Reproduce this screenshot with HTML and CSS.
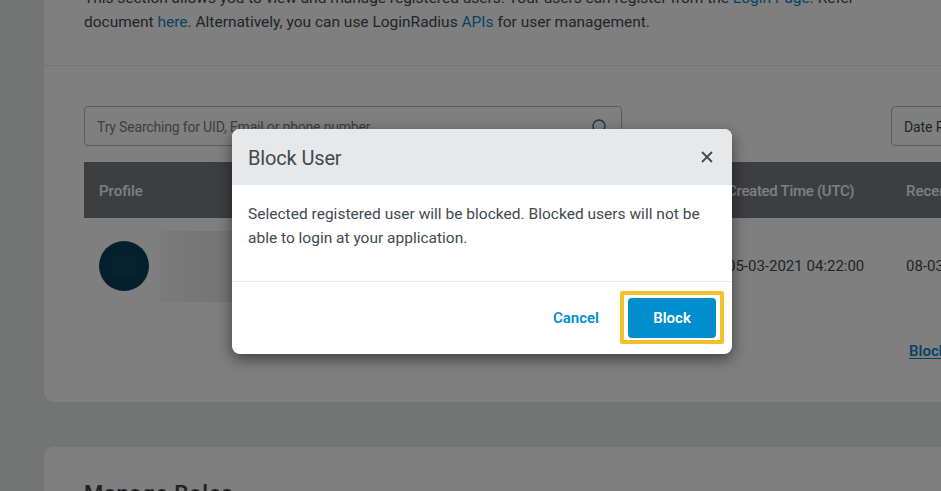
FILE: index.html
```html
<!DOCTYPE html>
<html lang="en">
<head>
<meta charset="utf-8">
<title>Manage Users</title>
<link rel="stylesheet" href="styles.css">
</head>
<body>
<main class="page">
  <section class="card users">
    <p class="intro"><span class="line l1">This section allows you to view and manage registered users. Your users can register from the <a>Login Page</a>. Refer</span><span class="line l2">document <a>here</a>. Alternatively, you can use LoginRadius <a>APIs</a> for user management.</span></p>
    <div class="content">
      <div class="filters">
        <div class="field search"><span class="placeholder">Try Searching for UID, Email or phone number</span>
          <svg width="18" height="18" viewBox="0 0 18 18" fill="none" stroke="#0d76b0" stroke-width="1.4"><circle cx="8" cy="8" r="6"/><path d="M12.2 12.2 16 16"/></svg>
        </div>
        <div class="field date">Date Range</div>
      </div>
      <div class="row head"><span class="profile">Profile</span><span class="created-head">Created Time (UTC)</span><span>Recent Login</span></div>
      <div class="row user">
        <div class="identity"><i class="avatar"><i class="initial"></i></i><i class="redacted"></i></div>
        <span class="created">05-03-2021 04:22:00</span><span class="recent">08-03-2021</span>
      </div>
      <div class="actions"><a>Block</a></div>
    </div>
  </section>
  <section class="card roles"><h2>Manage Roles</h2></section>
</main>
<div class="overlay">
  <div class="modal" role="dialog">
    <header><h3>Block User</h3>
      <svg width="12" height="12" viewBox="0 0 12 12" fill="none" stroke="#42494f" stroke-width="1.8"><path d="M1 1 11 11M11 1 1 11"/></svg>
    </header>
    <div class="message"><span class="line m1">Selected registered user will be blocked. Blocked users will not be</span><span class="line m2">able to login at your application.</span></div>
    <footer><button class="cancel">Cancel</button><div class="highlight"><button class="block">Block</button></div></footer>
  </div>
</div>
</body>
</html>
```
FILE: styles.css
```css
* { box-sizing: border-box; }
body { margin: 0; height: 491px; overflow: hidden; background: #e7ebe9; font-family: Roboto, "Liberation Sans", sans-serif; font-size: 15px; color: #42494f; }
a { color: #0a88c6; }
.line { display: block; white-space: nowrap; }
.page { height: 491px; padding-left: 44px; overflow: hidden; }
.card { width: 1100px; background: #fff; }
.users { height: 402px; border-radius: 0 0 10px 10px; }
.intro { display: flow-root; margin: 0; height: 66px; padding-left: 40px; border-bottom: 1px solid #e7e8ea; font-size: 15.5px; line-height: 24px; }
.l1 { margin-top: -14px; letter-spacing: -.015px; }
.l2 { letter-spacing: -.005px; }
.content { padding: 40px 0 0 40px; }
.filters { display: flex; justify-content: space-between; width: 957px; }
.field { height: 40px; border: 1px solid #b4b6b9; border-radius: 4px; display: flex; align-items: center; font-size: 14px; white-space: nowrap; padding: 2px 12px 0; }
.search { width: 538px; justify-content: space-between; }
.placeholder { color: #7a7f84; letter-spacing: -.18px; }
.date { width: 150px; letter-spacing: -.1px; }
.row { display: grid; grid-template-columns: 628px 179px 1fr; align-items: center; padding-left: 15px; white-space: nowrap; }
.head { height: 56px; margin-top: 16px; padding-top: 2px; background: #7a7c80; color: #fff; font-weight: 500; }
.created-head { letter-spacing: -.29px; }
.user { height: 96px; }
.identity { display: flex; align-items: center; gap: 11px; }
.avatar { display: flex; align-items: center; justify-content: center; width: 50px; height: 50px; border-radius: 50%; background: #08405e; }
.initial { width: 24px; height: 23px; background: #0e4664; }
.redacted { width: 100px; height: 71px; background: linear-gradient(90deg, #f6f6f6, #e9ebea 50%, #eee); }
.actions { padding: 28px 0 0 825px; font-weight: 600; }
.actions a { text-decoration: underline; text-underline-offset: 2px; }
.roles { height: 200px; margin-top: 45px; border-radius: 10px; padding: 33px 40px; }
h2 { margin: 0; font-size: 22px; line-height: 28px; font-weight: 600; letter-spacing: .75px; }
.overlay { position: absolute; inset: 0; background: rgba(0,0,0,.5); padding: 129px 0 0 232px; }
.modal { width: 500px; height: 225px; border-radius: 8px; background: #fff; box-shadow: 0 5px 15px rgba(0,0,0,.5); overflow: hidden; }
header { height: 56px; padding: 0 19px 0 16px; background: #e7e8ea; display: flex; align-items: center; justify-content: space-between; }
h3 { margin: 2px 0 0; font-size: 20px; font-weight: 400; letter-spacing: -.15px; }
.message { height: 97px; padding: 17px 16px; border-bottom: 1px solid #e7e8ea; font-size: 15.5px; line-height: 24px; }
.m1 { letter-spacing: .015px; }
footer { display: flex; justify-content: flex-end; align-items: center; height: 72px; padding: 0 8px 2px 0; gap: 21px; }
button { border: 0; padding: 0; background: none; font: 600 15px Roboto, sans-serif; color: #008ecf; }
.cancel { padding-top: 2px; }
.highlight { width: 104px; height: 53px; padding: 3px 4px; border: 4px solid #f2c12e; border-radius: 2px; }
.block { width: 88px; height: 40px; border-radius: 4px; background: #008ecf; color: #fff; }
```
